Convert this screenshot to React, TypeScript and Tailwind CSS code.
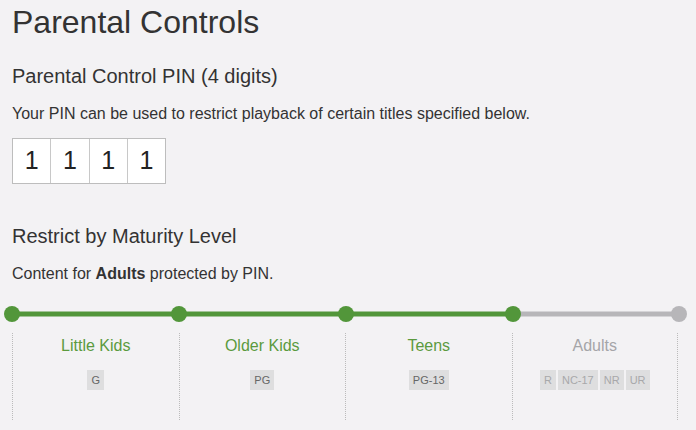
const levels = [
  { name: "Little Kids", ratings: ["G"], on: true },
  { name: "Older Kids", ratings: ["PG"], on: true },
  { name: "Teens", ratings: ["PG-13"], on: true },
  { name: "Adults", ratings: ["R", "NC-17", "NR", "UR"], on: false },
];

const GREEN = "#52963a";
const GREY = "#b7b6b9";

function MaturitySlider() {
  const xs = [12, 179, 346, 513, 679];
  return (
    <svg width="696" height="20" className="block">
      <line x1={xs[0]} y1="10" x2={xs[3]} y2="10" stroke={GREEN} strokeWidth="5" />
      <line x1={xs[3]} y1="10" x2={xs[4]} y2="10" stroke={GREY} strokeWidth="5" />
      {xs.map((x, i) => (
        <circle key={x} cx={x} cy="10" r="8" fill={i < 4 ? GREEN : GREY} />
      ))}
    </svg>
  );
}

export default function App() {
  return (
    <div
      className="w-[696px] h-[430px] overflow-hidden bg-[#f3f2f4] text-[#333]"
      style={{ fontFamily: '"Liberation Sans", Arial, sans-serif' }}
    >
      <div className="px-3">
        <h1 className="text-[32px] leading-[36px] pt-[4px] text-[#333]">Parental Controls</h1>
        <h2 className="text-[20px] leading-[24px] mt-[24px]">Parental Control PIN (4 digits)</h2>
        <p className="text-[16px] leading-[20px] mt-[16px]">
          Your PIN can be used to restrict playback of certain titles specified below.
        </p>
        <div className="mt-[14px] flex w-[154px] h-[46px] border border-[#bdbdbd] bg-white">
          {["1", "1", "1", "1"].map((d, i) => (
            <div
              key={i}
              className={`flex-1 flex items-center justify-center text-[25px] text-[#222] ${i > 0 ? "border-l border-[#c8c8c8]" : ""}`}
            >
              {d}
            </div>
          ))}
        </div>
        <h2 className="text-[20px] leading-[24px] mt-[40px]">Restrict by Maturity Level</h2>
        <p className="text-[16px] leading-[20px] mt-[16px]">
          Content for <b className="font-bold">Adults</b> protected by PIN.
        </p>
      </div>

      <div className="mt-[20px]">
        <MaturitySlider />
      </div>

      <div className="ml-3 mt-[9px] w-[666px] grid grid-cols-4 h-[87px]">
        {levels.map((l, i) => (
          <div
            key={l.name}
            className={`flex flex-col items-center border-l border-dotted border-[#bbb] ${i === 3 ? "border-r" : ""}`}
          >
            <div
              className={`text-[16px] leading-[18px] mt-[4px] ${l.on ? "text-[#5b9a3e]" : "text-[#a5a5a8]"}`}
            >
              {l.name}
            </div>
            <div className="flex gap-[2px] mt-[15px]">
              {l.ratings.map((r) => (
                <span
                  key={r}
                  className={`h-[20px] px-[4px] flex items-center text-[11px] bg-[#dededf] ${l.on ? "text-[#666]" : "text-[#a8a8aa]"}`}
                >
                  {r}
                </span>
              ))}
            </div>
          </div>
        ))}
      </div>
    </div>
  );
}
